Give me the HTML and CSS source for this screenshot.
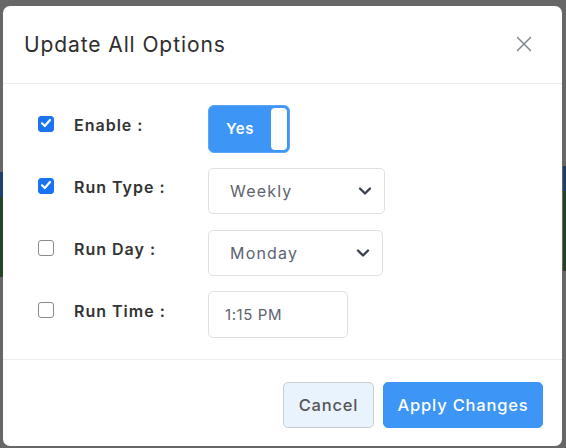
FILE: index.html
```html
<!DOCTYPE html>
<html>
<head>
<meta charset="utf-8">
<link rel="stylesheet" href="styles.css">
</head>
<body>
<div class="backdrop">
  <div class="strip strip-left"></div>
  <div class="strip strip-right"></div>
  <div class="modal">
    <div class="modal-header">
      <h2 class="modal-title">Update All Options</h2>
      <button class="close-btn" aria-label="Close">
        <svg width="16" height="16" viewBox="0 0 16 16"><path d="M1.5 1.5 L14.5 14.5 M14.5 1.5 L1.5 14.5" stroke="#80868f" stroke-width="1.5" fill="none" stroke-linecap="round"/></svg>
      </button>
    </div>
    <div class="modal-body">
      <div class="row">
        <span class="check checked"><svg viewBox="0 0 16 16" width="16" height="16"><path d="M4 8.3 L6.8 11 L12 5" stroke="#fff" stroke-width="2.2" fill="none" stroke-linecap="round" stroke-linejoin="round"/></svg></span>
        <span class="label">Enable :</span>
        <div class="toggle"><span class="toggle-text">Yes</span><span class="knob"></span></div>
      </div>
      <div class="row">
        <span class="check checked"><svg viewBox="0 0 16 16" width="16" height="16"><path d="M4 8.3 L6.8 11 L12 5" stroke="#fff" stroke-width="2.2" fill="none" stroke-linecap="round" stroke-linejoin="round"/></svg></span>
        <span class="label">Run Type :</span>
        <div class="select select-type"><span>Weekly</span><svg class="chev" width="14" height="10" viewBox="0 0 14 10"><path d="M2 2.5 L7 7.5 L12 2.5" stroke="#3b4350" stroke-width="2.4" fill="none" stroke-linecap="round" stroke-linejoin="round"/></svg></div>
      </div>
      <div class="row">
        <span class="check"></span>
        <span class="label">Run Day :</span>
        <div class="select select-day"><span>Monday</span><svg class="chev" width="14" height="10" viewBox="0 0 14 10"><path d="M2 2.5 L7 7.5 L12 2.5" stroke="#3b4350" stroke-width="2.4" fill="none" stroke-linecap="round" stroke-linejoin="round"/></svg></div>
      </div>
      <div class="row">
        <span class="check"></span>
        <span class="label">Run Time :</span>
        <div class="input-time">1:15 PM</div>
      </div>
    </div>
    <div class="modal-footer">
      <button class="btn btn-cancel">Cancel</button>
      <button class="btn btn-apply">Apply Changes</button>
    </div>
  </div>
</div>
</body>
</html>
```
FILE: styles.css
```css
html, body {
  margin: 0;
  padding: 0;
  background: #676767;
  font-family: Inter, "Open Sans", "Liberation Sans", sans-serif;
}
.backdrop {
  position: relative;
  width: 566px;
  height: 448px;
  padding: 6px 4px 0 3px;
  box-sizing: border-box;
  overflow: hidden;
}
.strip {
  position: absolute;
  width: 3px;
  height: 105px;
  background: linear-gradient(#1f3f6e 0 25px, #244424 25px 100%);
}
.strip-left { left: 0; top: 172px; }
.strip-right { right: 0; top: 166px; }
.modal {
  position: relative;
  background: #fff;
  border-radius: 7px;
  height: 440px;
  display: flex;
  flex-direction: column;
}
.modal-header {
  height: 78px;
  border-bottom: 1.5px solid #ececec;
  box-sizing: border-box;
  display: flex;
  align-items: center;
  justify-content: space-between;
  padding: 0 30px 0 21px;
}
.modal-title {
  margin: 0;
  font-size: 21px;
  font-weight: 400;
  color: #2e2e2e;
  letter-spacing: 0.9px;
}
.close-btn {
  background: none;
  border: 0;
  padding: 0;
  display: flex;
  margin-top: -2px;
}
.modal-body {
  height: 276px;
  box-sizing: border-box;
  padding: 21px 0 0 35px;
  display: flex;
  flex-direction: column;
  gap: 15px;
  border-bottom: 1.5px solid #ececec;
}
.row {
  display: flex;
  align-items: center;
  height: 47px;
}
.check {
  width: 16px;
  height: 16px;
  box-sizing: border-box;
  border: 1.5px solid #8a8a8a;
  border-radius: 3px;
  margin-top: -10px;
  display: flex;
  flex: none;
}
.check.checked {
  background: #1a73f0;
  border-color: #1a73f0;
}
.check.checked svg { margin: -1.5px; }
.label {
  margin-left: 20px;
  width: 134px;
  font-size: 16px;
  font-weight: 600;
  color: #333;
  margin-top: -8px;
  letter-spacing: 1px;
}
.toggle {
  width: 82px;
  height: 48px;
  box-sizing: border-box;
  background: #3d95f5;
  border: 1px solid #5aa5f6;
  border-radius: 6px;
  display: flex;
  align-items: center;
  padding: 2px;
}
.toggle-text {
  color: #fff;
  font-weight: 600;
  font-size: 15px;
  flex: 1;
  padding-left: 15px;
  letter-spacing: 0.6px;
}
.knob {
  width: 16px;
  height: 42px;
  background: #fff;
  border-radius: 4px;
}
.select, .input-time {
  height: 46px;
  box-sizing: border-box;
  border: 1.5px solid #e0e0e0;
  border-radius: 5px;
  display: flex;
  align-items: center;
  padding: 0 12px 0 21px;
  font-size: 16px;
  color: #5c6370;
  letter-spacing: 1.2px;
}
.select { justify-content: space-between; }
.select-type { width: 177px; }
.select-day { width: 175px; }
.input-time { width: 140px; height: 47px; font-size: 15px; padding-left: 16px; letter-spacing: 0.6px; }
.modal-footer {
  flex: 1;
  display: flex;
  justify-content: flex-end;
  align-items: flex-start;
  padding: 22px 19px 0 0;
  gap: 9px;
}
.btn {
  height: 46px;
  border-radius: 5px;
  font-family: inherit;
  font-size: 16.5px;
  font-weight: 500;
  padding: 0;
  letter-spacing: 0.8px;
}
.btn-cancel {
  width: 91px;
  background: #e9f3fd;
  border: 1.5px solid #c9cdd2;
  color: #555;
}
.btn-apply {
  width: 160px;
  background: #3d95f5;
  border: 1px solid #3d95f5;
  color: #fff;
}
```
